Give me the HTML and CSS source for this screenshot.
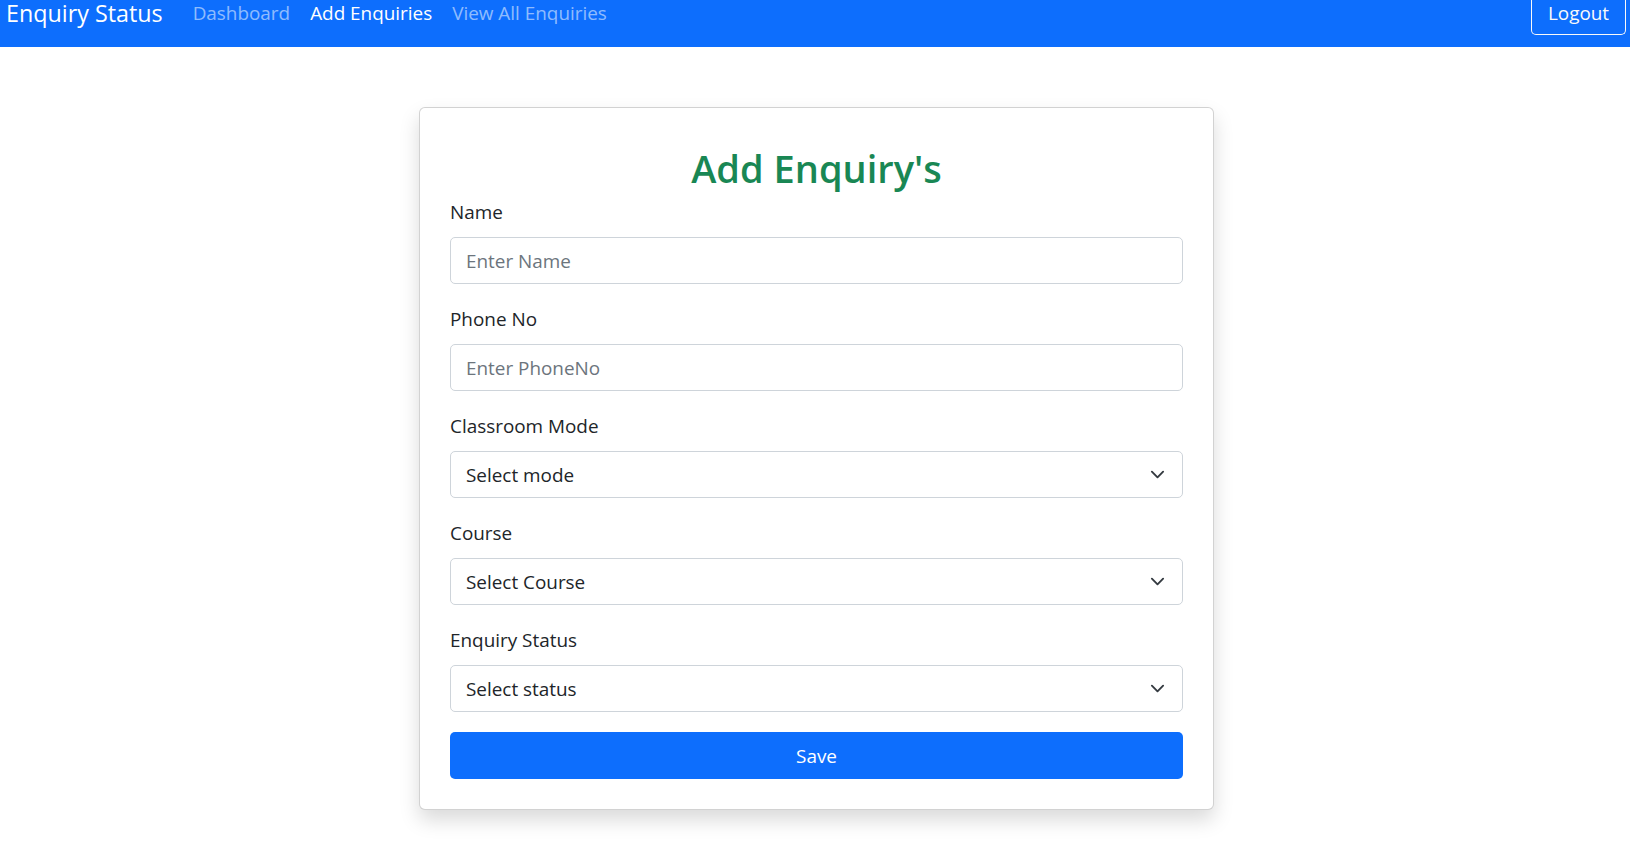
FILE: index.html
```html
<!DOCTYPE html>
<html lang="en">
<head>
<meta charset="utf-8">
<title>Add Enquiry's</title>
<link rel="stylesheet" href="styles.css">
</head>
<body>
<nav class="navbar">
  <a class="brand" href="#">Enquiry Status</a>
  <ul class="nav-links">
    <li><a class="nav-link" href="#">Dashboard</a></li>
    <li><a class="nav-link active" href="#">Add Enquiries</a></li>
    <li><a class="nav-link" href="#">View All Enquiries</a></li>
  </ul>
  <button class="btn-logout" type="button">Logout</button>
</nav>

<main class="page">
  <form class="card">
    <h2 class="card-title">Add Enquiry's</h2>

    <div class="field">
      <label class="field-label" for="name">Name</label>
      <input class="control" id="name" type="text" placeholder="Enter Name">
    </div>

    <div class="field">
      <label class="field-label" for="phone">Phone No</label>
      <input class="control" id="phone" type="text" placeholder="Enter PhoneNo">
    </div>

    <div class="field">
      <label class="field-label" for="mode">Classroom Mode</label>
      <div class="select-wrap">
        <select class="control select" id="mode">
          <option>Select mode</option>
        </select>
        <svg class="chevron" viewBox="0 0 16 16" aria-hidden="true"><path d="M2 5l6 6 6-6"/></svg>
      </div>
    </div>

    <div class="field">
      <label class="field-label" for="course">Course</label>
      <div class="select-wrap">
        <select class="control select" id="course">
          <option>Select Course</option>
        </select>
        <svg class="chevron" viewBox="0 0 16 16" aria-hidden="true"><path d="M2 5l6 6 6-6"/></svg>
      </div>
    </div>

    <div class="field">
      <label class="field-label" for="status">Enquiry Status</label>
      <div class="select-wrap">
        <select class="control select" id="status">
          <option>Select status</option>
        </select>
        <svg class="chevron" viewBox="0 0 16 16" aria-hidden="true"><path d="M2 5l6 6 6-6"/></svg>
      </div>
    </div>

    <button class="btn-save" type="button">Save</button>
  </form>
</main>
</body>
</html>
```

FILE: styles.css
```css
* {
  box-sizing: border-box;
}

html, body {
  margin: 0;
  padding: 0;
  background: #ffffff;
}

body {
  font-family: "Open Sans", "Noto Sans", "Liberation Sans", sans-serif;
  color: #212529;
  font-size: 18.9px;
  line-height: 30px;
}

/* ---------- navbar ---------- */
.navbar {
  display: flex;
  align-items: flex-start;
  height: 47px;
  background: #0d6efd;
  padding-left: 6px;
  padding-right: 4px;
}

.brand {
  padding-top: 1px;
  font-size: 23.3px;
  line-height: 25px;
  color: #ffffff;
  text-decoration: none;
  margin-right: 20px;
}

.nav-links {
  display: flex;
  list-style: none;
  margin: 0;
  padding: 1px 0 0;
}

.nav-link {
  display: block;
  padding: 0 10px;
  font-size: 18.9px;
  line-height: 25px;
  color: rgba(255, 255, 255, 0.55);
  text-decoration: none;
}

.nav-link.active {
  color: #ffffff;
}

.btn-logout {
  margin-left: auto;
  width: 95px;
  height: 35px;
  padding: 1px 0 9px;
  background: transparent;
  border: 1px solid #f8f9fa;
  border-top: none;
  border-radius: 0 0 5px 5px;
  color: #f8f9fa;
  font-family: inherit;
  font-size: 18.9px;
  line-height: 25px;
}

/* ---------- card ---------- */
.page {
  display: flex;
  justify-content: center;
  padding: 60px 0 40px 3px;
}

.card {
  width: 795px;
  padding: 30px;
  background: #ffffff;
  border: 1px solid rgba(0, 0, 0, 0.175);
  border-radius: 6px;
  box-shadow: 0 10px 20px rgba(0, 0, 0, 0.15);
}

.card-title {
  margin: 0 0 5px;
  padding-top: 6px;
  text-align: center;
  color: #198754;
  font-size: 38px;
  font-weight: 600;
  line-height: 48px;
}

.field {
  margin-bottom: 20px;
}

.field-label {
  display: block;
  margin-bottom: 10px;
  line-height: 30px;
}

.control {
  display: block;
  width: 100%;
  height: 47px;
  padding: 0 15px;
  border: 1px solid #ced4da;
  border-radius: 5px;
  background: #ffffff;
  color: #212529;
  font-family: inherit;
  font-size: 18.9px;
  line-height: 30px;
  outline: none;
}

.control::placeholder {
  color: #6c757d;
  opacity: 1;
}

.select-wrap {
  position: relative;
}

.select {
  appearance: none;
  -webkit-appearance: none;
  padding-right: 50px;
}

.chevron {
  position: absolute;
  right: 18px;
  top: 50%;
  width: 15px;
  height: 15px;
  margin-top: -7.5px;
  fill: none;
  stroke: #343a40;
  stroke-width: 2;
  stroke-linecap: round;
  stroke-linejoin: round;
  pointer-events: none;
}

.btn-save {
  display: block;
  width: 100%;
  height: 47px;
  border: none;
  border-radius: 5px;
  background: #0d6efd;
  color: #ffffff;
  font-family: inherit;
  font-size: 18.9px;
  line-height: 30px;
}
```
